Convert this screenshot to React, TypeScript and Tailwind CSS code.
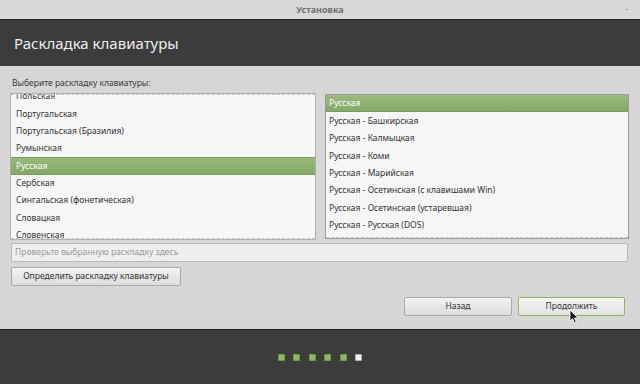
import React from "react";

const leftItems = [
  "Польская",
  "Португальская",
  "Португальская (Бразилия)",
  "Румынская",
  "Русская",
  "Сербская",
  "Сингальская (фонетическая)",
  "Словацкая",
  "Словенская",
];

const rightItems = [
  "Русская",
  "Русская - Башкирская",
  "Русская - Калмыцкая",
  "Русская - Коми",
  "Русская - Марийская",
  "Русская - Осетинская (с клавишами Win)",
  "Русская - Осетинская (устаревшая)",
  "Русская - Русская (DOS)",
];

export default function App() {
  return (
    <div
      className="w-[640px] h-[384px] flex flex-col overflow-hidden bg-[#d6d6d6] relative"
      style={{ fontFamily: '"Noto Sans", "Open Sans", sans-serif' }}
    >
      {/* Title bar */}
      <div className="h-[20px] shrink-0 bg-[#d8d8d8] border-b border-[#262626] flex items-center justify-center relative">
        <span className="text-[9px] font-bold text-[#707070] leading-none">Установка</span>
        <span className="absolute right-[12px] top-[4px] text-[9px] text-[#888] leading-none">-</span>
      </div>

      {/* Header */}
      <div className="h-[46px] shrink-0 bg-[#3c3c3c] flex items-center pl-[14px]">
        <span className="text-[15px] text-[#eeeeee] leading-none">Раскладка клавиатуры</span>
      </div>

      {/* Body */}
      <div className="flex-1 flex flex-col px-[10px] pt-[11px] border-b border-[#222]">
        <div className="text-[8.5px] text-[#3a3a3a] leading-[12px] pl-[2px]">Выберите раскладку клавиатуры:</div>
        <div className="flex gap-[9px] mt-[4px]">
          <div className="w-[306px] h-[147px] bg-[#f6f6f6] border border-[#b0b0b0] overflow-hidden relative">
            <div className="-mt-[6px]">
              {leftItems.map((t) => (
                <div
                  key={t}
                  className={
                    "h-[17.35px] flex items-center pl-[5px] text-[8.5px] leading-none " +
                    (t === "Русская"
                      ? "bg-gradient-to-b from-[#97b97a] to-[#84a866] text-white border-y border-[#7a9a5e]"
                      : "text-[#333]")
                  }
                >
                  {t}
                </div>
              ))}
            </div>
            <div className="absolute left-0 right-0 top-0 border-t border-dashed border-[#c8c8c8]" />
            <div className="absolute left-0 right-0 bottom-0 border-b border-dashed border-[#c8c8c8]" />
          </div>
          <div className="w-[304px] h-[145px] mt-[1px] bg-[#f6f6f6] border border-[#9c9c9c] overflow-hidden relative">
            {rightItems.map((t, i) => (
              <div
                key={t}
                className={
                  "h-[17.4px] flex items-center pl-[3px] text-[8.5px] leading-none " +
                  (i === 0
                    ? "bg-gradient-to-b from-[#9abb7e] to-[#84a866] text-white border-b border-[#7a9a5e]"
                    : "text-[#333]")
                }
              >
                {t}
              </div>
            ))}
            <div className="absolute left-0 right-0 bottom-0 border-b border-dashed border-[#c8c8c8]" />
          </div>
        </div>
        <div className="mt-[3px] ml-[1px] w-[617px] h-[19px] bg-[#efefef] border border-[#b8b8b8] rounded-[2px] flex items-center pl-[3px]">
          <span className="text-[8.5px] text-[#9a9a9a] leading-none">Проверьте выбранную раскладку здесь</span>
        </div>
        <div className="mt-[5px] ml-[1px]">
          <button className="w-[170px] h-[19px] bg-gradient-to-b from-[#f3f3f3] to-[#dcdcdc] border border-[#a9a9a9] rounded-[2px] text-[8.5px] text-[#333] leading-none flex items-center justify-center">
            Определить раскладку клавиатуры
          </button>
        </div>
        <div className="mt-[11px] flex justify-end gap-[6px] pr-[5px]">
          <button className="w-[108px] h-[19px] bg-gradient-to-b from-[#f3f3f3] to-[#dcdcdc] border border-[#a9a9a9] rounded-[2px] text-[8.5px] text-[#333] leading-none flex items-center justify-center">
            Назад
          </button>
          <button className="w-[107px] h-[19px] bg-gradient-to-b from-[#f5f5f5] to-[#e2e2e2] border border-[#8fb56a] rounded-[2px] text-[8.5px] text-[#333] leading-none flex items-center justify-center">
            Продолжить
          </button>
        </div>
      </div>

      {/* Footer */}
      <div className="h-[54px] shrink-0 bg-[#3c3c3c] flex items-center justify-center gap-[8.5px]">
        {[0, 1, 2, 3, 4].map((i) => (
          <div key={i} className="w-[7px] h-[7px] rounded-[1px] bg-[#8cb866] border border-[#6f9a4c]" />
        ))}
        <div className="w-[7px] h-[7px] rounded-[1px] bg-[#f0f0f0] border border-[#b0b0b0]" />
      </div>

      {/* Mouse cursor */}
      <svg className="absolute left-[569px] top-[309px]" width="11" height="15" viewBox="0 0 11 15">
        <path d="M1 1 L1 12 L3.6 9.6 L5.6 14 L7.3 13.2 L5.4 9 L9 9 Z" fill="#111" stroke="#fff" strokeWidth="0.8" />
      </svg>
    </div>
  );
}
